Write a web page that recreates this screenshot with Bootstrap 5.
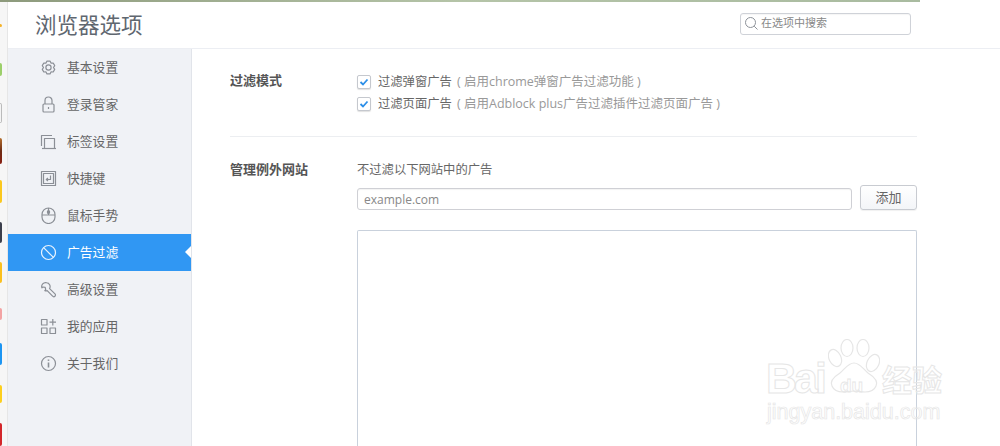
<!DOCTYPE html>
<html lang="zh-CN">
<head>
  <meta charset="UTF-8">
  <title>浏览器选项</title>
  <link href="https://cdn.jsdelivr.net/npm/bootstrap@5.3.3/dist/css/bootstrap.min.css" rel="stylesheet">
  <style>
    html, body { height: 446px; overflow: hidden; background: #fff; }
    body { font-family: "Open Sans", "Noto Sans CJK SC", sans-serif; font-size: 12.3px; color: #555; position: relative; }
    .top-strip { height: 2px; width: 920px; background: linear-gradient(90deg, #8d9a7c, #b5c4a8 50%, #a9bba0); }
    .page-wrap { height: 444px; }
    .app-strip { width: 8px; background: #f6f6f6; border-right: 1px solid #e6e6e6; flex: none; }
    .sliver { width: 2px; border-radius: 0 2px 2px 0; filter: blur(.4px); }
    .s0 { height: 3px; margin-top: 22px; background: #f5b32a; }
    .s1 { height: 13px; margin-top: 36px; background: #9ccf6a; }
    .s2 { height: 20px; margin-top: 27px; background: #f4f4f4; border: 1px solid #bbb; border-left: 0; }
    .s3 { height: 26px; margin-top: 15px; background: linear-gradient(#b5702e, #6e2c14 50%, #8a1f12); }
    .s4 { height: 23px; margin-top: 16px; background: #fbc81e; }
    .s5 { height: 21px; margin-top: 19px; background: #3c3f4c; }
    .s6 { height: 21px; margin-top: 19px; background: #fbc01e; }
    .s7 { height: 12px; margin-top: 25px; background: #f3a3a3; }
    .s8 { height: 22px; margin-top: 23px; background: #1c95f2; }
    .s9 { height: 18px; margin-top: 20px; background: #fdcf1d; }
    .s10 { height: 23px; margin-top: 20px; background: #d3262a; }
    .main-area { min-width: 0; }
    .head-bar { height: 47px; border-bottom: 1px solid #eceef3; padding-left: 27px; padding-right: 89px; }
    .head-title { font-size: 21.5px; color: #5f6770; font-weight: 400; margin: 0; line-height: 1; }
    .search-box { width: 171px; height: 22px; margin-bottom: 3px; gap: 2px; border: 1px solid #cfd2d8; border-radius: 3px; padding-left: 3px; color: #888; font-size: 11px; box-shadow: inset 0 1px 1px rgba(0,0,0,.04); }
    .body-row { height: 397px; }
    .side-menu { width: 184px; flex: none; background: #f0f2f6; border-right: 1px solid #e1e4ea; }
    .side-item { height: 37px; padding-left: 32px; color: #666; font-size: 12.8px; position: relative; gap: 10px; text-decoration: none; }
    .side-item svg { width: 17px; height: 17px; flex: none; stroke: #8b8f96; fill: none; stroke-width: 1.2; stroke-linejoin: round; }
    .side-item.on { background: #3097f3; color: #fff; }
    .side-item.on svg { stroke: #e8f3fe; }
    .side-item.on::after { content: ""; position: absolute; right: 0; top: 12px; border: 6.5px solid transparent; border-right-color: #fff; border-left: 0; }
    .content-pane { width: 725px; padding: 23px 0 0 38px; flex: none; }
    .opt-label { width: 127px; flex: none; margin-top: -1px; font-weight: 700; color: #555; font-size: 13px; line-height: 18px; }
    .opt-col { margin-top: -1px; }
    .opt-check { height: 22px; gap: 7px; color: #666; }
    .fake-box { width: 14px; height: 14px; border: 1px solid #c5c8ce; border-radius: 2px; background: #fff; flex: none; box-shadow: 0 1px 1px rgba(0,0,0,.12); }
    .fake-box svg { display: block; width: 12px; height: 12px; }
    .opt-hint { color: #999; font-size: 12.5px; margin-left: 2px; }
    .row-line { border-bottom: 1px solid #eceef1; padding-bottom: 21px; margin-bottom: 24px; }
    .sub-text { line-height: 18px; color: #666; margin-bottom: 6px; }
    .site-input { width: 495px; height: 22px; margin-top: 2px; border: 1px solid #cfd0d5; border-radius: 3px; padding: 0 6px; font-size: 12px; color: #888; line-height: 21px; box-shadow: inset 0 1px 1px rgba(0,0,0,.05); }
    .add-btn { width: 57px; height: 25px; margin-left: 8px; padding: 1px 0 0; font-size: 13px; color: #666; background: linear-gradient(#fff, #f3f5f8); border: 1px solid #c8cbd1; border-radius: 3px; box-shadow: 0 1px 1px rgba(0,0,0,.06); }
    .site-list { width: 560px; height: 230px; margin-top: 20px; border: 1px solid #c9d1dc; border-bottom: 0; border-radius: 2px 2px 0 0; }
    .wm { position: absolute; left: 765px; top: 338px; width: 190px; height: 100px; color: transparent; -webkit-text-stroke: 1px #e6e6e6; pointer-events: none; }
    .wm-logo { position: absolute; left: 1px; top: 19px; font: 700 43px/1 "Liberation Sans", sans-serif; letter-spacing: -3px; }
    .wm-du { position: absolute; left: 75px; top: 38px; font: 700 19px/1 "Liberation Sans", sans-serif; -webkit-text-stroke: .8px #e6e6e6; }
    .wm-cn { position: absolute; left: 117px; top: 25px; font: 700 30px/1 "Noto Sans CJK SC", sans-serif; }
    .wm-url { position: absolute; left: 2px; top: 64px; font: 400 21.5px/1 "Liberation Sans", sans-serif; -webkit-text-stroke: .7px #e6e6e6; white-space: nowrap; }
    .wm-paw { position: absolute; left: 63px; top: 1px; width: 52px; height: 54px; }
  </style>
</head>
<body>
  <div class="top-strip"></div>
  <div class="page-wrap d-flex">
    <div class="app-strip d-flex flex-column">
      <div class="sliver s0"></div>
      <div class="sliver s1"></div>
      <div class="sliver s2"></div>
      <div class="sliver s3"></div>
      <div class="sliver s4"></div>
      <div class="sliver s5"></div>
      <div class="sliver s6"></div>
      <div class="sliver s7"></div>
      <div class="sliver s8"></div>
      <div class="sliver s9"></div>
      <div class="sliver s10"></div>
    </div>
    <div class="main-area flex-grow-1">
      <div class="head-bar d-flex align-items-center justify-content-between">
        <h1 class="head-title">浏览器选项</h1>
        <div class="search-box d-flex align-items-center">
          <svg width="15" height="15" viewBox="0 0 15 15" fill="none" stroke="#8d9299" stroke-width="1"><circle cx="6.5" cy="6.5" r="5"/><path d="M10.2 10.2 13.5 13.5"/></svg>
          <span>在选项中搜索</span>
        </div>
      </div>
      <div class="body-row d-flex">
        <nav class="side-menu d-flex flex-column">
          <a class="side-item d-flex align-items-center" href="#"><svg viewBox="0 0 17 17"><path d="M7 2.1h3l1 2 2.2-.1 1.5 2.6-1.2 1.900 1.2 1.900-1.500 2.600-2.200-.1-1 2H7l-1-2-2.200.1-1.500-2.600 1.200-1.900-1.200-1.900 1.500-2.600 2.200.1z"/><circle cx="8.500" cy="8.500" r="2.600"/></svg>基本设置</a>
          <a class="side-item d-flex align-items-center" href="#"><svg viewBox="0 0 17 17"><path d="M5 8V4.500a3.500 3.500 0 0 1 7 0V8"/><rect x="3" y="8" width="11" height="8" rx="1"/><path d="M8.500 11v2"/></svg>登录管家</a>
          <a class="side-item d-flex align-items-center" href="#"><svg viewBox="0 0 17 17"><path d="M1.500 13V2.500H12"/><path d="M4.500 15.500V5.500h10v10"/><path d="M2 15.500h14"/></svg>标签设置</a>
          <a class="side-item d-flex align-items-center" href="#"><svg viewBox="0 0 17 17"><rect x="1.500" y="1.500" width="14" height="14"/><rect x="3.500" y="3.500" width="10" height="10"/><path d="M10.500 5.500v4H6.500M8 8 6.300 9.500 8 11"/></svg>快捷键</a>
          <a class="side-item d-flex align-items-center" href="#"><svg viewBox="0 0 17 17"><rect x="2" y="1" width="13" height="15.500" rx="6.500"/><path d="M2 8h13M8.500 1V8"/><rect x="7.500" y="3.500" width="2" height="3" rx="1"/></svg>鼠标手势</a>
          <a class="side-item on d-flex align-items-center" href="#"><svg viewBox="0 0 17 17"><circle cx="8.500" cy="8.500" r="7"/><path d="M3.600 3.600 13.400 13.400"/></svg>广告过滤</a>
          <a class="side-item d-flex align-items-center" href="#"><svg viewBox="0 0 17 17"><path d="M6.500 1.700a4 4 0 0 0-4.600 5.200l1-.9 2.300.4.500 2.200-.9 1a4 4 0 0 0 2.400.1L12.600 15.200a1.600 1.600 0 0 0 2.400-2.300L9.600 7.600A4 4 0 0 0 6.500 1.700z"/></svg>高级设置</a>
          <a class="side-item d-flex align-items-center" href="#"><svg viewBox="0 0 17 17"><rect x="1.500" y="1.500" width="5.500" height="5.500"/><rect x="1.500" y="10" width="5.500" height="5.500"/><rect x="10" y="10" width="5.500" height="5.500"/><path d="M12.800 1v6.500M9.500 4.200H16"/></svg>我的应用</a>
          <a class="side-item d-flex align-items-center" href="#"><svg viewBox="0 0 17 17"><circle cx="8.500" cy="8.500" r="7"/><path d="M8.500 7.500v5" stroke-width="1.600"/><path d="M8.500 4.500v1.400" stroke-width="1.600"/></svg>关于我们</a>
        </nav>
        <div class="content-pane">
          <div class="d-flex row-line">
            <div class="opt-label">过滤模式</div>
            <div class="opt-col">
              <div class="opt-check d-flex align-items-center">
                <span class="fake-box"><svg viewBox="0 0 12 12" fill="none" stroke="#2c8fe8" stroke-width="1.800"><path d="M2.500 6 5 8.500 9.500 3.500"/></svg></span>
                <span>过滤弹窗广告<span class="opt-hint"> ( 启用chrome弹窗广告过滤功能 )</span></span>
              </div>
              <div class="opt-check d-flex align-items-center">
                <span class="fake-box"><svg viewBox="0 0 12 12" fill="none" stroke="#2c8fe8" stroke-width="1.800"><path d="M2.500 6 5 8.500 9.500 3.500"/></svg></span>
                <span>过滤页面广告<span class="opt-hint"> ( 启用Adblock plus广告过滤插件过滤页面广告 )</span></span>
              </div>
            </div>
          </div>
          <div class="d-flex">
            <div class="opt-label">管理例外网站</div>
            <div>
              <div class="sub-text">不过滤以下网站中的广告</div>
              <div class="d-flex align-items-center">
                <div class="site-input">example.com</div>
                <button class="add-btn" type="button">添加</button>
              </div>
              <div class="site-list"></div>
            </div>
          </div>
        </div>
      </div>
    </div>
  </div>
  <div class="wm">
    <svg class="wm-paw" viewBox="0 0 52 54" fill="none" stroke="#e6e6e6" stroke-width="1.200"><ellipse cx="7" cy="19" rx="6" ry="9" transform="rotate(-25 7 19)"/><ellipse cx="19" cy="9" rx="6" ry="8.500"/><ellipse cx="35" cy="9" rx="6" ry="8.500"/><ellipse cx="45" cy="24" rx="6" ry="9" transform="rotate(25 45 24)"/><path d="M26 24c-6 0-9 6-14 10-8 5-10 9-8 13 2 5 7 6 11 6 4 0 7-1 11-1s7 1 11 1c4 0 9-1 11-6 2-4 0-8-8-13-5-4-8-10-14-10z"/></svg>
    <span class="wm-logo">Bai</span><span class="wm-du">du</span><span class="wm-cn">经验</span>
    <span class="wm-url">jingyan.baidu.com</span>
  </div>
</body>
</html>
